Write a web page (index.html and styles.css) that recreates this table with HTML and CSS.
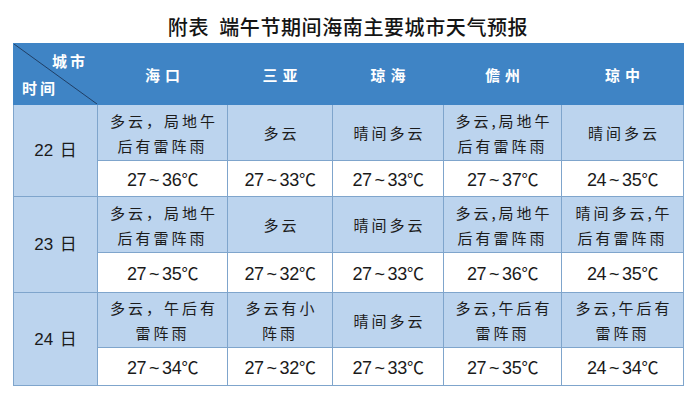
FILE: index.html
```html
<!DOCTYPE html>
<html lang="zh-CN">
<head>
<meta charset="utf-8">
<link rel="stylesheet" href="styles.css">
</head>
<body>
<div class="page">
  <h1 class="title">附表&nbsp;&nbsp;端午节期间海南主要城市天气预报</h1>
  <table class="wx">
    <colgroup>
      <col class="c0"><col class="c1"><col class="c2"><col class="c3"><col class="c4"><col class="c5">
    </colgroup>
    <thead>
      <tr class="hrow">
        <th class="corner">
          <svg class="diag" viewBox="0 0 84 61" preserveAspectRatio="none"><line x1="0" y1="0" x2="84" y2="61" stroke="#1f3d63" stroke-width="1"/></svg>
          <span class="ctop">城市</span>
          <span class="cbot">时间</span>
        </th>
        <th>海口</th><th>三亚</th><th>琼海</th><th>儋州</th><th>琼中</th>
      </tr>
    </thead>
    <tbody>
      <tr class="drow r1">
        <td class="day" rowspan="2">22 日</td>
        <td>多云，局地午<br>后有雷阵雨</td><td>多云</td><td>晴间多云</td><td>多云,局地午<br>后有雷阵雨</td><td>晴间多云</td>
      </tr>
      <tr class="trow t1">
        <td>27 ~ 36<span class="deg">℃</span></td><td>27 ~ 33<span class="deg">℃</span></td><td>27 ~ 33<span class="deg">℃</span></td><td>27 ~ 37<span class="deg">℃</span></td><td>24 ~ 35<span class="deg">℃</span></td>
      </tr>
      <tr class="drow r2">
        <td class="day" rowspan="2">23 日</td>
        <td>多云，局地午<br>后有雷阵雨</td><td>多云</td><td>晴间多云</td><td>多云,局地午<br>后有雷阵雨</td><td>晴间多云,午<br>后有雷阵雨</td>
      </tr>
      <tr class="trow t2">
        <td>27 ~ 35<span class="deg">℃</span></td><td>27 ~ 32<span class="deg">℃</span></td><td>27 ~ 33<span class="deg">℃</span></td><td>27 ~ 36<span class="deg">℃</span></td><td>24 ~ 35<span class="deg">℃</span></td>
      </tr>
      <tr class="drow r3">
        <td class="day" rowspan="2">24 日</td>
        <td>多云，午后有<br>雷阵雨</td><td>多云有小<br>阵雨</td><td>晴间多云</td><td>多云,午后有<br>雷阵雨</td><td>多云,午后有<br>雷阵雨</td>
      </tr>
      <tr class="trow t3">
        <td>27 ~ 34<span class="deg">℃</span></td><td>27 ~ 32<span class="deg">℃</span></td><td>27 ~ 33<span class="deg">℃</span></td><td>27 ~ 35<span class="deg">℃</span></td><td>24 ~ 34<span class="deg">℃</span></td>
      </tr>
    </tbody>
  </table>
</div>
</body>
</html>
```
FILE: styles.css
```css
html, body {
  margin: 0;
  padding: 0;
  background: #ffffff;
}
.page {
  width: 697px;
  height: 400px;
  padding: 0 0 0 13px;
  box-sizing: border-box;
  font-family: "Noto Sans CJK SC", "Noto Sans", sans-serif;
}
.title {
  margin: 0;
  height: 43px;
  box-sizing: border-box;
  padding: 13px 0 0 0;
  width: 670px;
  text-align: center;
  font-size: 20px;
  line-height: 28px;
  font-weight: 500;
  color: #141414;
  letter-spacing: 0.6px;
}
.wx {
  width: 670px;
  border-collapse: collapse;
  table-layout: fixed;
  border: 1px solid #8eaccb;
}
.c0 { width: 84px; }
.c1 { width: 130px; }
.c2 { width: 105px; }
.c3 { width: 111px; }
.c4 { width: 118px; }
.c5 { width: 122px; }
.wx th, .wx td {
  border: 1px solid #7fa5cc;
  padding: 0;
  text-align: center;
  vertical-align: middle;
}
.hrow th {
  height: 60px;
  background: #3f84c5;
  color: #ffffff;
  font-size: 15px;
  font-weight: 700;
  letter-spacing: 5px;
  text-indent: 5px;
  border-color: #3f84c5;
}
.corner {
  position: relative;
}
.diag {
  position: absolute;
  left: 0;
  top: 0;
  width: 100%;
  height: 100%;
}
.ctop, .cbot {
  position: absolute;
  white-space: nowrap;
  line-height: 20px;
  letter-spacing: 3px;
  text-indent: 0;
}
.ctop {
  left: 38px;
  top: 7px;
}
.cbot {
  left: 8px;
  top: 34px;
}
.drow td {
  background: #bcd4ee;
  color: #1c1c1c;
  font-size: 15px;
  line-height: 25px;
  letter-spacing: 3px;
  text-indent: 3px;
}
.r1 td, .r2 td { height: 55px; }
.r3 td { height: 54px; }
.drow td.day {
  font-family: "Liberation Sans", "Noto Sans CJK SC", sans-serif;
  font-size: 17px;
  letter-spacing: 0;
  text-indent: 0;
  word-spacing: 2px;
  color: #1a1a1a;
}
.trow td {
  background: #ffffff;
  color: #1a1a1a;
  font-family: "Liberation Sans", "Noto Sans CJK SC", sans-serif;
  font-size: 18px;
  letter-spacing: -0.3px;
  word-spacing: -2px;
}
.deg {
  font-family: "Noto Sans CJK SC", sans-serif;
  font-size: 17px;
}
.t1 td { height: 35px; }
.t2 td { height: 39px; }
.t3 td { height: 37px; }
```
